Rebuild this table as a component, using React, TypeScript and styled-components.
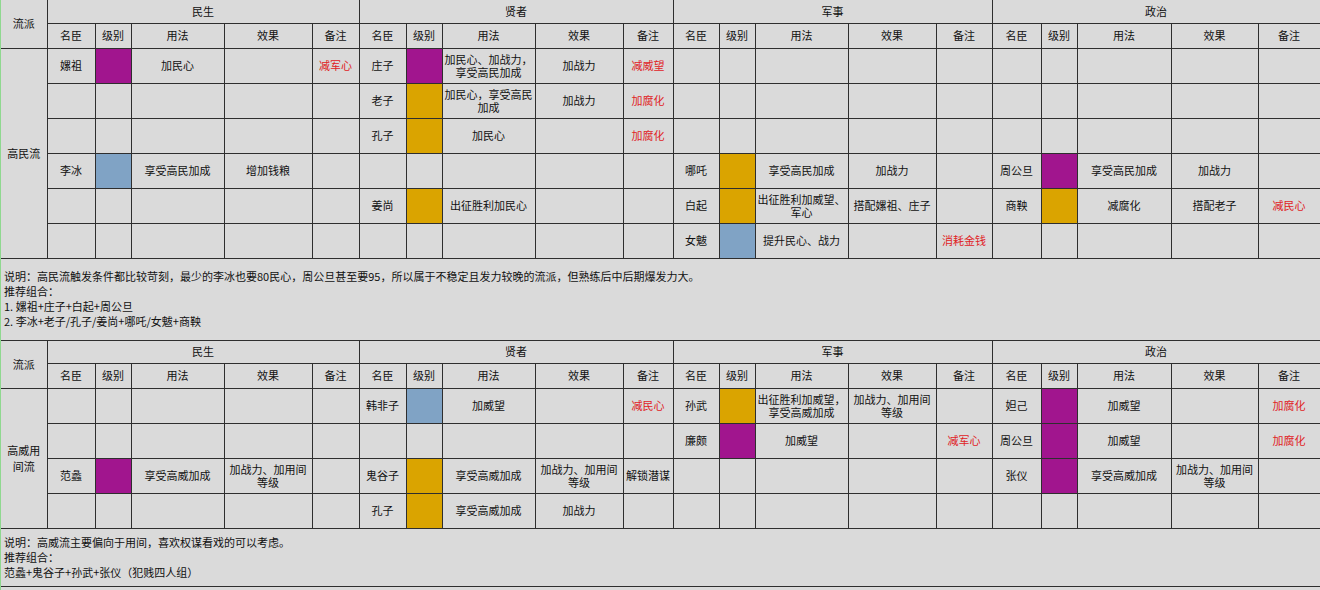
import styled, { createGlobalStyle } from 'styled-components';

type Level = 'purple' | 'gold' | 'blue';

type Entry = {
  name: string;
  level: Level;
  usage: string;
  effect?: string;
  note?: string;
  plainNote?: boolean;
};

type Row = (Entry | null)[];

type SectionData = {
  school: string;
  rows: Row[];
  note: string;
  noteHeight: number;
};

const LEVEL_COLORS: Record<Level, string> = {
  purple: '#a1158e',
  gold: '#daa400',
  blue: '#80a3c5',
};

const GROUPS = ['民生', '贤者', '军事', '政治'];
const FIELDS = ['名臣', '级别', '用法', '效果', '备注'];
const COL_WIDTHS = [46, 48, 36, 93, 88, 47, 47, 36, 93, 88, 50, 46, 36, 93, 88, 56, 49, 36, 94, 87, 62];

const SECTIONS: SectionData[] = [
  {
    school: '高民流',
    rows: [
      [
        { name: '嫘祖', level: 'purple', usage: '加民心', note: '减军心' },
        { name: '庄子', level: 'purple', usage: '加民心、加战力，\n享受高民加成', effect: '加战力', note: '减威望' },
        null,
        null,
      ],
      [
        null,
        { name: '老子', level: 'gold', usage: '加民心，享受高民\n加成', effect: '加战力', note: '加腐化' },
        null,
        null,
      ],
      [null, { name: '孔子', level: 'gold', usage: '加民心', note: '加腐化' }, null, null],
      [
        { name: '李冰', level: 'blue', usage: '享受高民加成', effect: '增加钱粮' },
        null,
        { name: '哪吒', level: 'gold', usage: '享受高民加成', effect: '加战力' },
        { name: '周公旦', level: 'purple', usage: '享受高民加成', effect: '加战力' },
      ],
      [
        null,
        { name: '姜尚', level: 'gold', usage: '出征胜利加民心' },
        { name: '白起', level: 'gold', usage: '出征胜利加威望、\n军心', effect: '搭配嫘祖、庄子' },
        { name: '商鞅', level: 'gold', usage: '减腐化', effect: '搭配老子', note: '减民心' },
      ],
      [null, null, { name: '女魃', level: 'blue', usage: '提升民心、战力', note: '消耗金钱' }, null],
    ],
    note:
      '说明：高民流触发条件都比较苛刻，最少的李冰也要80民心，周公旦甚至要95，所以属于不稳定且发力较晚的流派，但熟练后中后期爆发力大。\n推荐组合：\n1. 嫘祖+庄子+白起+周公旦\n2. 李冰+老子/孔子/姜尚+哪吒/女魃+商鞅',
    noteHeight: 82,
  },
  {
    school: '高威用\n间流',
    rows: [
      [
        null,
        { name: '韩非子', level: 'blue', usage: '加威望', note: '减民心' },
        { name: '孙武', level: 'gold', usage: '出征胜利加威望，\n享受高威加成', effect: '加战力、加用间\n等级' },
        { name: '妲己', level: 'purple', usage: '加威望', note: '加腐化' },
      ],
      [
        null,
        null,
        { name: '廉颇', level: 'purple', usage: '加威望', note: '减军心' },
        { name: '周公旦', level: 'purple', usage: '加威望', note: '加腐化' },
      ],
      [
        { name: '范蠡', level: 'purple', usage: '享受高威加成', effect: '加战力、加用间\n等级' },
        {
          name: '鬼谷子',
          level: 'gold',
          usage: '享受高威加成',
          effect: '加战力、加用间\n等级',
          note: '解锁潜谋',
          plainNote: true,
        },
        null,
        { name: '张仪', level: 'purple', usage: '享受高威加成', effect: '加战力、加用间\n等级' },
      ],
      [null, { name: '孔子', level: 'gold', usage: '享受高威加成', effect: '加战力' }, null, null],
    ],
    note: '说明：高威流主要偏向于用间，喜欢权谋看戏的可以考虑。\n推荐组合：\n范蠡+鬼谷子+孙武+张仪（犯贱四人组）',
    noteHeight: 58,
  },
];

const GlobalStyle = createGlobalStyle`
  html, body {
    margin: 0;
    padding: 0;
    background: #dadada;
  }
  body {
    font-family: "Noto Sans CJK SC", "Liberation Sans", sans-serif;
    color: #111;
  }
`;

const Page = styled.div`
  min-height: 100vh;
  border-left: 1px solid #8fd88f;
  background: #dadada;
`;

const Table = styled.table`
  width: 1319px;
  table-layout: fixed;
  border-collapse: collapse;
  border-left: 1px hidden;
  border-top: 1px hidden;
  font-size: 11px;
`;

const Col = styled.col<{ $w: number }>`
  width: ${p => p.$w}px;
`;

const HeadRow = styled.tr<{ $h: number }>`
  height: ${p => p.$h}px;
`;

const DataRow = styled.tr`
  height: 35px;
`;

const baseCell = `
  border: 1px solid #2e2e2e;
  background: #dadada;
  text-align: center;
  vertical-align: middle;
  padding: 0 1px;
  line-height: 13px;
  white-space: pre;
  overflow: visible;
`;

const HeadCell = styled.th`
  ${baseCell}
  font-weight: normal;
`;

const SchoolCell = styled.td`
  ${baseCell}
  white-space: pre-line;
  line-height: 16px;
`;

const Cell = styled.td<{ $warn?: boolean }>`
  ${baseCell}
  color: ${p => (p.$warn ? '#e0221f' : '#111')};
`;

const Swatch = styled.td<{ $color: string }>`
  ${baseCell}
  background: ${p => p.$color};
`;

const NoteCell = styled.td<{ $h: number }>`
  border: 1px solid #2e2e2e;
  background: #dadada;
  height: ${p => p.$h}px;
  padding: 0 3px;
  vertical-align: middle;
  text-align: left;
  white-space: pre-line;
  line-height: 15px;
  box-sizing: border-box;
`;

const EntryCells = ({ entry }: { entry: Entry | null }) => {
  if (!entry) {
    return (
      <>
        <Cell />
        <Cell />
        <Cell />
        <Cell />
        <Cell />
      </>
    );
  }
  return (
    <>
      <Cell>{entry.name}</Cell>
      <Swatch $color={LEVEL_COLORS[entry.level]} />
      <Cell>{entry.usage}</Cell>
      <Cell>{entry.effect}</Cell>
      <Cell $warn={!entry.plainNote}>{entry.note}</Cell>
    </>
  );
};

const Section = ({ data }: { data: SectionData }) => (
  <tbody>
    <HeadRow $h={23}>
      <HeadCell rowSpan={2}>流派</HeadCell>
      {GROUPS.map(g => (
        <HeadCell key={g} colSpan={5}>
          {g}
        </HeadCell>
      ))}
    </HeadRow>
    <HeadRow $h={25}>
      {GROUPS.flatMap(g => FIELDS.map(f => <HeadCell key={g + f}>{f}</HeadCell>))}
    </HeadRow>
    {data.rows.map((row, i) => (
      <DataRow key={i}>
        {i === 0 && <SchoolCell rowSpan={data.rows.length}>{data.school}</SchoolCell>}
        {row.map((entry, j) => (
          <EntryCells key={j} entry={entry} />
        ))}
      </DataRow>
    ))}
    <tr>
      <NoteCell colSpan={21} $h={data.noteHeight}>
        {data.note}
      </NoteCell>
    </tr>
  </tbody>
);

const App = () => (
  <Page>
    <GlobalStyle />
    <Table>
      <colgroup>
        {COL_WIDTHS.map((w, i) => (
          <Col key={i} $w={w} />
        ))}
      </colgroup>
      {SECTIONS.map(s => (
        <Section key={s.school} data={s} />
      ))}
    </Table>
  </Page>
);

export default App;
